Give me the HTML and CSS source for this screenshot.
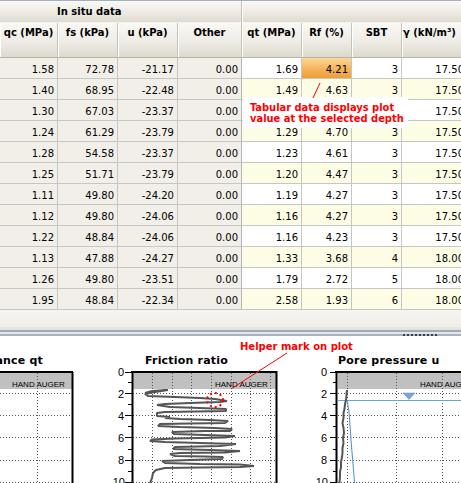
FILE: index.html
```html
<!DOCTYPE html>
<html>
<head>
<meta charset="utf-8">
<link rel="stylesheet" href="styles.css">
</head>
<body>
<div class="app">
  <div class="grid-wrap">
    <div class="row band-row">
      <div class="band-cell band-insitu">In situ data</div>
      <div class="band-cell band-calc"></div>
    </div>
    <div class="row head-row">
      <div class="hcell">qc (MPa)</div>
      <div class="hcell">fs (kPa)</div>
      <div class="hcell">u (kPa)</div>
      <div class="hcell sep">Other</div>
      <div class="hcell">qt (MPa)</div>
      <div class="hcell">Rf (%)</div>
      <div class="hcell">SBT</div>
      <div class="hcell left">γ (kN/m³)</div>
    </div>
    <div class="row data-row odd"><div class="c">1.58</div><div class="c">72.78</div><div class="c">-21.17</div><div class="c sep">0.00</div><div class="c r">1.69</div><div class="c r selected">4.21</div><div class="c r">3</div><div class="c r">17.50</div></div>
    <div class="row data-row even"><div class="c">1.40</div><div class="c">68.95</div><div class="c">-22.48</div><div class="c sep">0.00</div><div class="c r">1.49</div><div class="c r">4.63</div><div class="c r">3</div><div class="c r">17.50</div></div>
    <div class="row data-row odd"><div class="c">1.30</div><div class="c">67.03</div><div class="c">-23.37</div><div class="c sep">0.00</div><div class="c r"></div><div class="c r"></div><div class="c r"></div><div class="c r">17.50</div></div>
    <div class="row data-row even"><div class="c">1.24</div><div class="c">61.29</div><div class="c">-23.79</div><div class="c sep">0.00</div><div class="c r">1.29</div><div class="c r">4.70</div><div class="c r">3</div><div class="c r">17.50</div></div>
    <div class="row data-row odd"><div class="c">1.28</div><div class="c">54.58</div><div class="c">-23.37</div><div class="c sep">0.00</div><div class="c r">1.23</div><div class="c r">4.61</div><div class="c r">3</div><div class="c r">17.50</div></div>
    <div class="row data-row even"><div class="c">1.25</div><div class="c">51.71</div><div class="c">-23.79</div><div class="c sep">0.00</div><div class="c r">1.20</div><div class="c r">4.47</div><div class="c r">3</div><div class="c r">17.50</div></div>
    <div class="row data-row odd"><div class="c">1.11</div><div class="c">49.80</div><div class="c">-24.20</div><div class="c sep">0.00</div><div class="c r">1.19</div><div class="c r">4.27</div><div class="c r">3</div><div class="c r">17.50</div></div>
    <div class="row data-row even"><div class="c">1.12</div><div class="c">49.80</div><div class="c">-24.06</div><div class="c sep">0.00</div><div class="c r">1.16</div><div class="c r">4.27</div><div class="c r">3</div><div class="c r">17.50</div></div>
    <div class="row data-row odd"><div class="c">1.22</div><div class="c">48.84</div><div class="c">-24.06</div><div class="c sep">0.00</div><div class="c r">1.16</div><div class="c r">4.23</div><div class="c r">3</div><div class="c r">17.50</div></div>
    <div class="row data-row even"><div class="c">1.13</div><div class="c">47.88</div><div class="c">-24.27</div><div class="c sep">0.00</div><div class="c r">1.33</div><div class="c r">3.68</div><div class="c r">4</div><div class="c r">18.00</div></div>
    <div class="row data-row odd"><div class="c">1.26</div><div class="c">49.80</div><div class="c">-23.51</div><div class="c sep">0.00</div><div class="c r">1.79</div><div class="c r">2.72</div><div class="c r">5</div><div class="c r">18.00</div></div>
    <div class="row data-row even"><div class="c">1.95</div><div class="c">48.84</div><div class="c">-22.34</div><div class="c sep">0.00</div><div class="c r">2.58</div><div class="c r">1.93</div><div class="c r">6</div><div class="c r">18.00</div></div>

    <div class="tooltip">Tabular data displays plot<br>value at the selected depth</div>
    <svg class="pointer" width="20" height="20" viewBox="0 0 20 20"><line x1="3" y1="18" x2="10" y2="3" class="red-line"/></svg>
  </div>
  <div class="grid-fill"></div>
  <div class="splitter"><span class="grip"></span></div>

  <svg class="charts" width="461" height="146" viewBox="0 337 461 146">
    <text class="title" x="43" y="364" text-anchor="end">Cone resistance qt</text>
    <text class="title" x="145" y="364">Friction ratio</text>
    <text class="title" x="338" y="364">Pore pressure u</text>

    <rect x="0" y="373" width="72" height="16" class="band"/>
    <text class="band-label" x="12" y="387">HAND AUGER</text>
    <path class="dots" d="M37.5 373V483 M0 393.5H72 M0 415.5H72 M0 437.5H72 M0 460.5H72 M0 482.5H72"/>
    <path class="frame" d="M0 372H73 M72.5 372V483"/>

    <rect x="133" y="373" width="143" height="16" class="band"/>
    <text class="band-label" x="215" y="387">HAND AUGER</text>
    <path class="dots" d="M152.5 373V483 M172.5 373V483 M191.5 373V483 M211.5 373V483 M231.5 373V483 M250.5 373V483 M270.5 373V483 M133 393.5H276 M133 415.5H276 M133 437.5H276 M133 460.5H276 M133 482.5H276"/>
    <path class="frame" d="M132.5 371V483 M131 372H277.5 M276.5 372V483"/>
    <path class="tick" d="M125 372.5H132 M125 393.5H132 M125 415.5H132 M125 437.5H132 M125 460.5H132 M125 482.5H132 M128 382.5H132 M128 404.5H132 M128 426.5H132 M128 449.5H132 M128 471.5H132"/>
    <text class="axis" x="124" y="376" text-anchor="end">0</text>
    <text class="axis" x="124" y="397.5" text-anchor="end">2</text>
    <text class="axis" x="124" y="419.5" text-anchor="end">4</text>
    <text class="axis" x="124" y="441.5" text-anchor="end">6</text>
    <text class="axis" x="124" y="464" text-anchor="end">8</text>
    <text class="axis" x="125" y="486" text-anchor="end">10</text>
    <polyline class="trace" points="145,393 152,391 168,390 152,392.5 145,394 148,396 175,397 200,398 215,399 227,401 220,402 190,403 165,404 157,405 170,407 200,408 226,409 226,411 195,411.5 165,412 157,413 157,416 170,417 165,418 180,419 210,420 228,421 225,423 190,423.5 160,424 158,426 180,427 215,428 232,429 230,431 205,431 172,432 174,434 205,435 235,436 225,437.5 175,438.5 152,439.5 150,441 165,442 200,443 236,444 220,446 175,447 173,449 210,450 240,451 225,452.5 180,453 170,454 175,456 205,456.5 223,457 222,459 190,460 162,461 165,463 200,464 240,464.5 254,466 240,467 200,467.5 165,468 156,470 153,473 152,478 150,483"/>
    <ellipse class="helper" cx="215" cy="400" rx="8" ry="7"/>

    <rect x="338" y="373" width="123" height="16" class="band"/>
    <text class="band-label" x="420" y="387">HAND AUGER</text>
    <path class="dots" d="M347.5 373V483 M396.5 373V483 M442.5 373V483 M338 393.5H461 M338 415.5H461 M338 437.5H461 M338 460.5H461 M338 482.5H461"/>
    <path class="frame" d="M336.5 371V483 M335 372H461"/>
    <path class="tick" d="M330 372.5H337 M330 393.5H337 M330 415.5H337 M330 437.5H337 M330 460.5H337 M330 482.5H337 M333 382.5H337 M333 404.5H337 M333 426.5H337 M333 449.5H337 M333 471.5H337"/>
    <text class="axis" x="327" y="376" text-anchor="end">0</text>
    <text class="axis" x="327" y="397.5" text-anchor="end">2</text>
    <text class="axis" x="327" y="419.5" text-anchor="end">4</text>
    <text class="axis" x="327" y="441.5" text-anchor="end">6</text>
    <text class="axis" x="327" y="464" text-anchor="end">8</text>
    <text class="axis" x="328" y="486" text-anchor="end">10</text>
    <path class="water" d="M337 400.5H461"/>
    <polygon class="wt" points="403,393 415,393 409,399.5"/>
    <polyline class="hydro" points="347.5,400.5 348,406 349,412 349.5,418 350,426 350.5,432 351,440 351.5,446 352,452 352.5,458 353,464 353.5,470 354,476 354.5,483"/>
    <polyline class="trace" points="347,390 346.5,395 346,400 345,404 344.5,409 343.5,413 343.5,418 342.5,423 343.5,428 344,433 343,438 343.5,443 342.5,448 342.5,453 342,457 341,462 341,467 340,472 340,477 339.5,483"/>

    <text class="note" x="240" y="350">Helper mark on plot</text>
    <line class="red-line" x1="287" y1="353" x2="231" y2="389"/>
  </svg>
</div>
</body>
</html>
```

FILE: styles.css
```css
html, body {
  margin: 0;
  padding: 0;
  background: #ffffff;
  overflow: hidden;
}

.app {
  width: 461px;
  height: 483px;
  overflow: hidden;
  font-family: "DejaVu Sans", sans-serif;
  font-size: 10px;
  color: #000;
}

.grid-wrap {
  position: relative;
  width: 461px;
  overflow: hidden;
}

.row {
  display: grid;
  grid-template-columns: 58px 60px 60px 64px 60px 50px 50px 66px;
  width: 468px;
}

.band-row {
  grid-template-columns: 242px 226px;
  height: 23px;
  box-sizing: border-box;
  border-top: 1px solid #9fb0c4;
}

.band-cell {
  background: linear-gradient(#faf9f5, #ebe9e1 60%, #dedbcf);
  border-bottom: 1px solid #f4f3ee;
  font-weight: bold;
  line-height: 14px;
  padding-top: 4px;
  box-sizing: border-box;
  height: 22px;
}

.band-insitu {
  padding-left: 57px;
  border-right: 1px solid #c4c1b4;
}

.band-calc {
  box-shadow: inset 1px 0 #ffffff;
}

.head-row {
  height: 35px;
}

.hcell {
  box-sizing: border-box;
  height: 35px;
  background: linear-gradient(#f9f8f4, #eeece5 55%, #dcd9cd);
  border-right: 1px solid #c7c4b7;
  border-bottom: 1px solid #b7b4a6;
  box-shadow: inset 1px 0 #ffffff;
  font-weight: bold;
  text-align: center;
  line-height: 14px;
  padding-top: 3px;
  white-space: nowrap;
  overflow: hidden;
}

.hcell.left {
  text-align: left;
  padding-left: 1px;
}

.data-row {
  height: 21px;
}

.c {
  box-sizing: border-box;
  height: 21px;
  border-right: 1px solid #c6c6c6;
  border-bottom: 1px solid #c6c6c6;
  background: #f1efe8;
  text-align: right;
  padding: 5px 3px 0 0;
  line-height: 14px;
  white-space: nowrap;
}

.c.sep {
  border-right: 1px solid #b4b4b4;
}

.odd .c.r {
  background: #ffffff;
}

.even .c.r {
  background: #fdfde6;
}

.odd .c.selected {
  background: linear-gradient(#fcd798, #f4b45a 55%, #ee9d34);
}

.tooltip {
  position: absolute;
  left: 243px;
  top: 97px;
  width: 165px;
  height: 31px;
  box-sizing: border-box;
  background: #ffffff;
  color: #ff0000;
  font-family: "DejaVu Sans Condensed", "DejaVu Sans", sans-serif;
  font-stretch: condensed;
  font-weight: bold;
  font-size: 11px;
  line-height: 11px;
  padding: 5px 0 0 7px;
  white-space: nowrap;
}

.pointer {
  position: absolute;
  left: 310px;
  top: 80px;
}

.red-line {
  stroke: #ff0000;
  stroke-width: 1;
}

.grid-fill {
  height: 17px;
  background: linear-gradient(#f6f5f1, #eeede7);
}

.splitter {
  height: 10px;
  display: flex;
  align-items: flex-end;
  background: linear-gradient(to bottom,
    #e6e5df 0, #e6e5df 3px,
    #a0a9b8 3px, #a0a9b8 5px,
    #e2e5ea 5px, #e2e5ea 7px,
    #aab2c1 7px, #aab2c1 9px,
    #ffffff 9px);
}

.grip {
  display: block;
  margin-left: 403px;
  margin-bottom: 1px;
  width: 35px;
  height: 2px;
  background: repeating-linear-gradient(to right, #3c3c3c 0, #3c3c3c 2px, transparent 2px, transparent 4px);
}

.charts {
  display: block;
  background: #ffffff;
}

.title {
  font-family: "DejaVu Sans", sans-serif;
  font-weight: bold;
  font-size: 11px;
  letter-spacing: 0.2px;
  fill: #000;
}

.band {
  fill: #c0c0c0;
}

.band-label {
  font-family: "Liberation Sans", Arial, sans-serif;
  font-size: 8px;
  fill: #000;
}

.axis {
  font-family: "Liberation Sans", Arial, sans-serif;
  font-size: 11px;
  fill: #000;
}

.dots {
  fill: none;
  stroke: #555555;
  stroke-width: 1;
  stroke-dasharray: 1 2;
}

.frame {
  fill: none;
  stroke: #000000;
  stroke-width: 2;
}

.tick {
  fill: none;
  stroke: #000000;
  stroke-width: 1;
}

.trace {
  fill: none;
  stroke: #555555;
  stroke-width: 2;
  stroke-linejoin: bevel;
}

.hydro {
  fill: none;
  stroke: #4a8fd6;
  stroke-width: 1;
}

.water {
  fill: none;
  stroke: #6fa0d6;
  stroke-width: 1;
}

.wt {
  fill: #78a6dc;
  stroke: #5c8fcc;
  stroke-width: 0.5;
}

.helper {
  fill: none;
  stroke: #ff0000;
  stroke-width: 2;
  stroke-dasharray: 2 3;
}

.note {
  font-family: "DejaVu Sans", sans-serif;
  font-weight: bold;
  font-size: 10px;
  fill: #ff0000;
}
```
